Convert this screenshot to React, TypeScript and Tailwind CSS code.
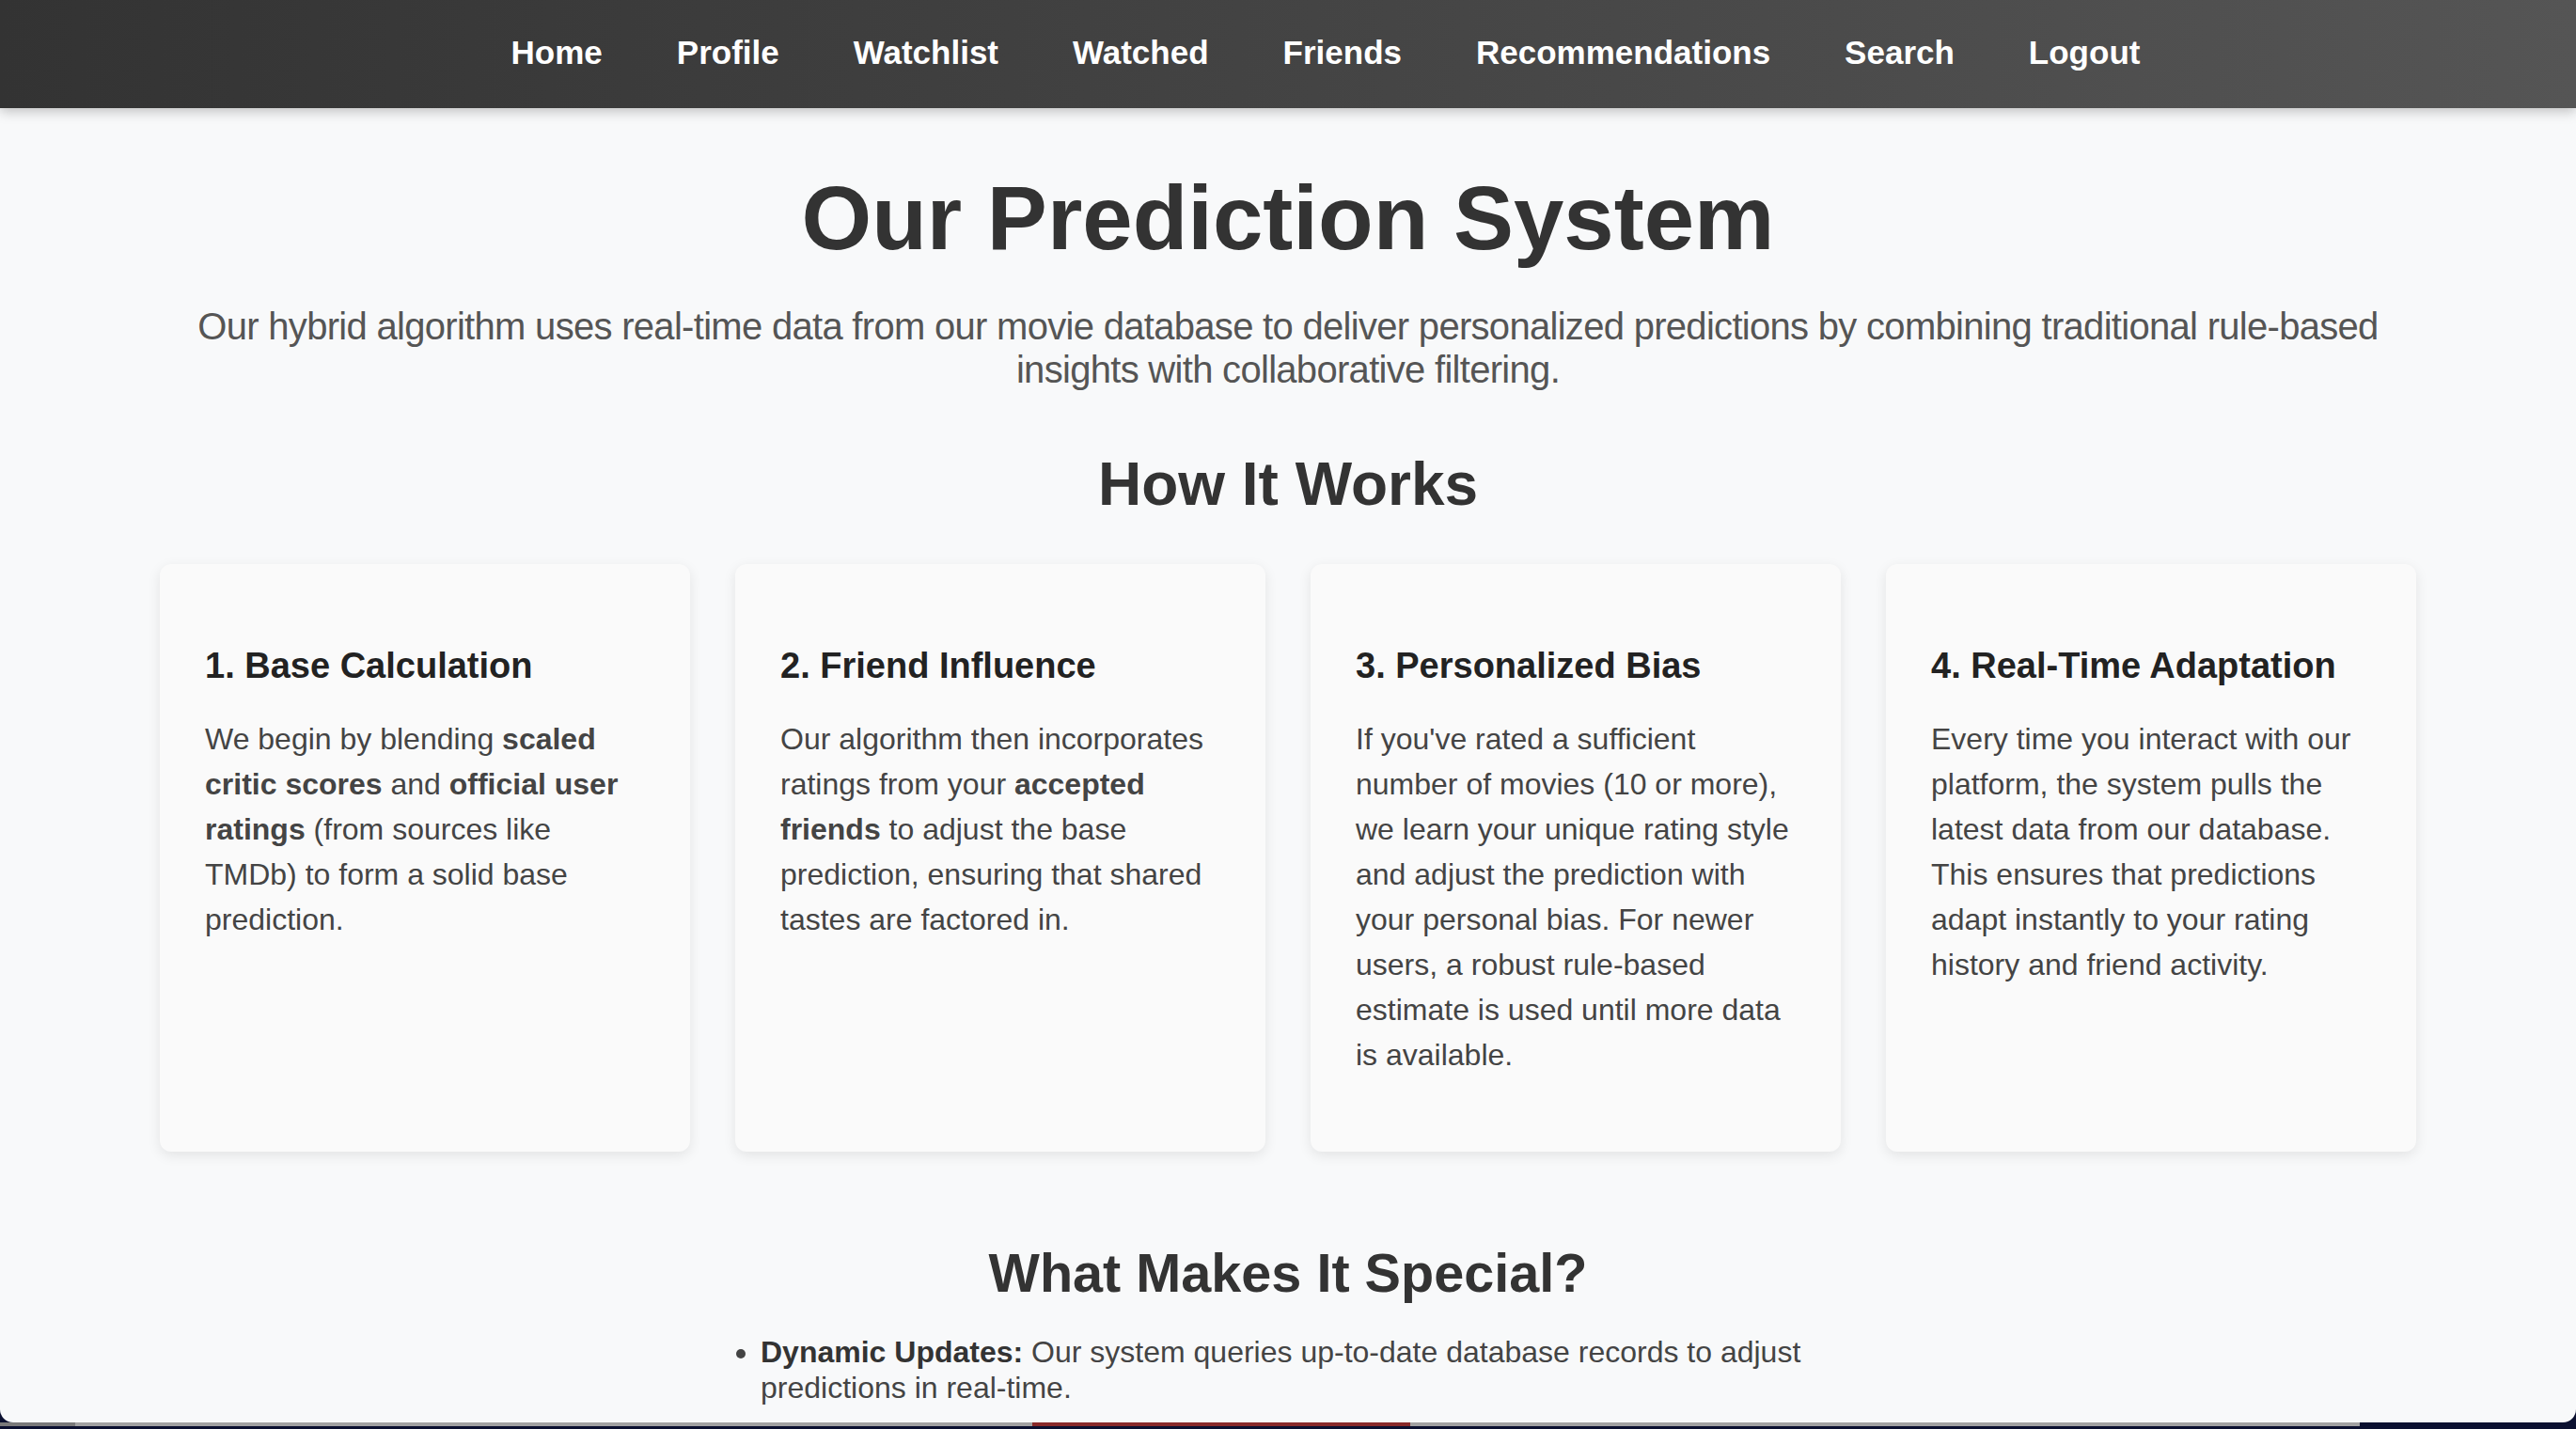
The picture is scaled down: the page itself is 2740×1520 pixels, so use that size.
const navLinks = [
  "Home",
  "Profile",
  "Watchlist",
  "Watched",
  "Friends",
  "Recommendations",
  "Search",
  "Logout",
];

const Card = ({ title, children }: { title: string; children: React.ReactNode }) => {
  return (
    <div className="rounded-[12px] bg-[#fafafa] px-[48px] pt-[48px] pb-[48px] shadow-[0_4px_14px_rgba(0,0,0,0.09)]">
      <h3 className="mt-[38px] text-[38px] leading-[44px] font-bold text-[#222]">{title}</h3>
      <p className="mt-[32px] mb-[31px] text-[32px] leading-[48px] text-[#444]">{children}</p>
    </div>
  );
};

const App = () => {
  return (
    <div className="flex h-[1520px] w-[2740px] flex-col overflow-hidden bg-[#0b1030] font-['Liberation_Sans',Arial,sans-serif]">
      <div className="flex h-[1513px] flex-col overflow-hidden rounded-b-[14px] bg-[#f8f9fa]">
        <nav className="relative z-10 flex h-[115px] items-center bg-linear-to-r from-[#333333] to-[#555555] shadow-[0_4px_12px_rgba(0,0,0,0.22)]">
          <ul className="-mt-[2px] flex w-full justify-center gap-[79px] pl-[80px]">
            {navLinks.map((link) => (
              <li key={link}>
                <a href="#" className="text-[35px] font-bold text-white">
                  {link}
                </a>
              </li>
            ))}
          </ul>
        </nav>

        <main className="mx-auto w-[2400px]">
          <h1 className="mt-[62px] text-center text-[96px] leading-[110px] font-bold text-[#333]">
            Our Prediction System
          </h1>
          <p className="mt-[37px] text-center text-[40px] leading-[46px] tracking-[-0.7px] text-[#555]">
            Our hybrid algorithm uses real-time data from our movie database to deliver personalized
            predictions by combining traditional rule-based insights with collaborative filtering.
          </p>

          <h2 className="mt-[62px] text-center text-[64px] leading-[74px] font-bold text-[#333]">
            How It Works
          </h2>
          <div className="mt-[48px] grid grid-cols-4 gap-[48px]">
            <Card title="1. Base Calculation">
              We begin by blending <strong>scaled critic scores</strong> and{" "}
              <strong>official user ratings</strong> (from sources like TMDb) to form a solid base
              prediction.
            </Card>
            <Card title="2. Friend Influence">
              Our algorithm then incorporates ratings from your <strong>accepted friends</strong> to
              adjust the base prediction, ensuring that shared tastes are factored in.
            </Card>
            <Card title="3. Personalized Bias">
              If you've rated a sufficient number of movies (10 or more), we learn your unique rating
              style and adjust the prediction with your personal bias. For newer users, a robust
              rule-based estimate is used until more data is available.
            </Card>
            <Card title="4. Real-Time Adaptation">
              Every time you interact with our platform, the system pulls the latest data from our
              database. This ensures that predictions adapt instantly to your rating history and
              friend activity.
            </Card>
          </div>

          <h2 className="mt-[96px] text-center text-[57.6px] leading-[66px] font-bold text-[#333]">
            What Makes It Special?
          </h2>
          <ul className="mx-auto mt-[32px] w-[1282px] list-disc pl-[80px] text-[32px] leading-[38px] text-[#444]">
            <li>
              <strong className="text-[#333]">Dynamic Updates:</strong> Our system queries up-to-date
              database records to adjust predictions in real-time.
            </li>
          </ul>
        </main>
      </div>

      {/* desktop peeking out below the browser window */}
      <div className="flex h-[4px]">
        <div className="w-[80px] bg-[#7a7a7a]" />
        <div className="w-[1018px] bg-[#a2a2a2]" />
        <div className="w-[402px] bg-[#8a2a2a]" />
        <div className="w-[1010px] bg-[#a2a2a2]" />
        <div className="flex-1 bg-[#0b1030]" />
      </div>
      <div className="h-[3px] bg-[#0b1030]" />
    </div>
  );
};

export default App;
